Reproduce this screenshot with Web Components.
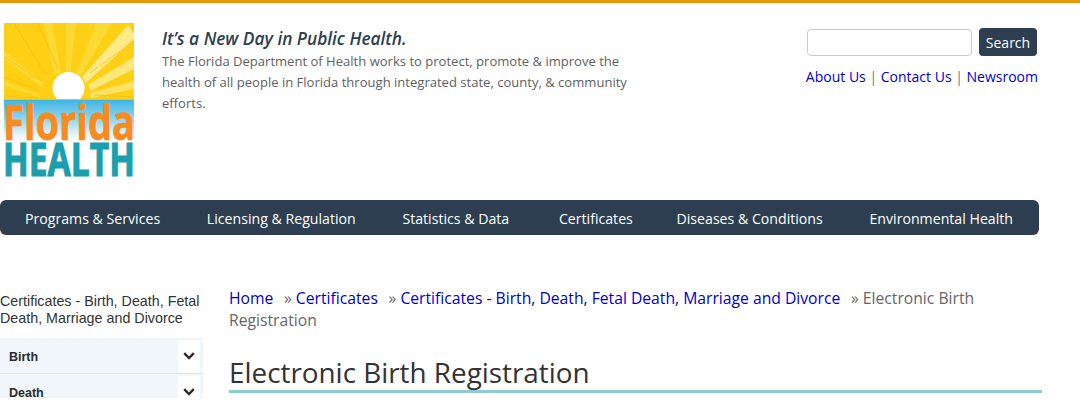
<!DOCTYPE html>
<html>
<head>
<meta charset="utf-8">
<title>Electronic Birth Registration</title>
<style>
  html, body { margin: 0; padding: 0; background: #fff; }
  body { font-family: "Open Sans", sans-serif; }
  #page { display: block; height: 198px; overflow: hidden; }
</style>
</head>
<body>

<template id="site-logo-tpl">
  <style>
    :host { display: block; width: 130px; height: 153px; flex: none; }
    svg { display: block; overflow: visible; }
    text { font-family: "Open Sans", sans-serif; }
  </style>
  <svg width="130" height="153" viewBox="0 0 130 153">
    <defs>
      <linearGradient id="sky" x1="0" y1="0" x2="0" y2="1">
        <stop offset="0" stop-color="#3db5e4"/>
        <stop offset=".5" stop-color="#9fd9ef"/>
        <stop offset=".85" stop-color="#f2f9fc"/>
        <stop offset="1" stop-color="#fff"/>
      </linearGradient>
    </defs>
    <rect width="130" height="77" fill="#fdd015"/>
    <g fill="#fdd933">
      <polygon points="62,50 62,0 72,0 66,50"/>
      <polygon points="72,52 92,0 108,0 76,54"/>
      <polygon points="50,52 40,0 48,0 57,50"/>
      <polygon points="40,60 0,28 0,36 38,64"/>
      <polygon points="36,72 0,58 0,63 36,74"/>
    </g>
    <g>
      <polygon points="78,54 124,2 130,10 130,16 82,60" fill="#feea86"/>
      <polygon points="84,62 130,34 130,46 86,68" fill="#fee77a"/>
      <polygon points="86,70 130,58 130,66 87,75" fill="#fee264"/>
    </g>
    <g stroke="#f5b50a" stroke-width=".6" fill="none">
      <path d="M42 52 10 0"/>
      <path d="M54 46 34 0"/>
      <path d="M38 58 0 34"/>
      <path d="M36 68 0 54"/>
      <path d="M34 75 0 73"/>
      <path d="M86 50 130 18"/>
      <path d="M90 72 130 74"/>
    </g>
    <circle cx="64.500" cy="65" r="16" fill="#fff"/>
    <rect y="76" width="130" height="1" fill="#f6c300"/>
    <rect y="77" width="130" height="43" fill="url(#sky)"/>
    <text transform="translate(-1 117) scale(1 1.250)" font-size="38" font-weight="700" fill="#f68b1f" stroke="#f68b1f" stroke-width=".5" textLength="132" lengthAdjust="spacingAndGlyphs">Florida</text>
    <rect y="120" width="130" height="33" fill="#fff"/>
    <text transform="translate(-1 153) scale(1 1.420)" font-size="32.400" font-weight="700" fill="#1b9fae" stroke="#1b9fae" stroke-width=".8" textLength="132" lengthAdjust="spacingAndGlyphs">HEALTH</text>
  </svg>
</template>

<template id="site-header-tpl">
  <style>
    :host { display: block; border-top: 3px solid #e8950e; }
    .row { display: flex; height: 197px; box-sizing: border-box; padding: 20px 42px 0 4px; }
    .intro { margin-left: 28px; width: 480px; color: #5f5f5f; }
    h2 { margin: 0; font: italic 600 17.300px/24px "Open Sans", sans-serif; color: #2c3e50; padding-top: 4px; }
    p { margin: 0; font: 13.060px/20.800px "Open Sans", sans-serif; }
    .right { margin-left: auto; width: 232px; display: flex; flex-direction: column; align-items: flex-end; padding-top: 5px; }
    .search { display: flex; gap: 7px; align-items: center; margin-right: 1px; }
    input { width: 165px; height: 27px; box-sizing: border-box; border: 1px solid #ccc; border-radius: 4px; padding: 0 6px; background: #fff; margin: 0; }
    button { width: 58px; height: 28px; border: 0; border-radius: 4px; background: #2c3e50; color: #fff; padding: 0; font: 14px "Open Sans", sans-serif; }
    .links { font: 14px/20px "Open Sans", sans-serif; color: #777; margin-top: 11px; white-space: nowrap; }
    a { color: #0000cd; text-decoration: none; }
  </style>
  <div class="row">
    <site-logo></site-logo>
    <div class="intro">
      <h2>It’s a New Day in Public Health.</h2>
      <p>The Florida Department of Health works to protect, promote &amp; improve the<br>health of all people in Florida through integrated state, county, &amp; community<br>efforts.</p>
    </div>
    <div class="right">
      <div class="search"><input type="text" aria-label="Search"><button>Search</button></div>
      <div class="links"><a href="#">About Us</a> | <a href="#">Contact Us</a> | <a href="#">Newsroom</a></div>
    </div>
  </div>
</template>

<template id="main-nav-tpl">
  <style>
    :host { display: flex; justify-content: space-between; align-items: center; box-sizing: border-box; width: 1039px; height: 35px; padding: 1px 26px 0 25px; background: #2c3e50; border-radius: 6px; }
    ::slotted(a) { color: #fff; text-decoration: none; font: 14.150px "Open Sans", sans-serif; white-space: nowrap; }
    ::slotted(a:nth-child(4)) { margin: 0 -3px 0 3px; }
  </style>
  <slot></slot>
</template>

<template id="side-menu-tpl">
  <style>
    :host { display: block; width: 203px; flex: none; }
    .title { font: 14.300px/17px "Liberation Sans", Arial, sans-serif; color: #333; margin-bottom: 11px; padding-top: 6px; white-space: nowrap; }
  </style>
  <div class="title"><slot name="title"></slot></div>
  <slot></slot>
</template>

<template id="side-item-tpl">
  <style>
    :host { display: flex; align-items: center; justify-content: space-between; height: 36px; padding: 2px 3px 1px 9px; box-sizing: border-box; background: #f0f6fa; border-bottom: 1px solid #dfe3e6; }
    span { font: bold 12.500px "Liberation Sans", Arial, sans-serif; color: #2b2b2b; position: relative; top: 1px; }
    .btn { width: 22px; height: 33px; background: #fff; display: flex; align-items: center; justify-content: center; }
    svg { display: block; }
  </style>
  <span><slot></slot></span>
  <div class="btn">
    <svg width="12" height="8" viewBox="0 0 12 8"><path d="M1.200 1.200 6 6 10.800 1.200" fill="none" stroke="#2b2b2b" stroke-width="2.400"/></svg>
  </div>
</template>

<template id="bread-crumbs-tpl">
  <style>
    :host { display: block; font: 15.700px/22px "Open Sans", sans-serif; color: #666; }
    ::slotted(a) { color: #0000cd; text-decoration: none; }
    ::slotted(.sep) { padding-left: 2.500px; }
  </style>
  <slot></slot>
</template>

<template id="page-title-tpl">
  <style>
    :host { display: block; margin-top: 21px; border-bottom: 3px solid #8ccbd3; height: 38px; }
    h1 { margin: 0; font: 400 27.850px/40px "Open Sans", sans-serif; color: #333; }
  </style>
  <h1><slot></slot></h1>
</template>

<template id="page-body-tpl">
  <style>
    :host { display: flex; padding-top: 52px; width: 1042px; }
    .content { margin-left: 26px; flex: 1; min-width: 0; }
  </style>
  <slot name="side"></slot>
  <div class="content"><slot></slot></div>
</template>

<site-header></site-header>
<div id="page">
  <main-nav>
    <a href="#">Programs &amp; Services</a>
    <a href="#">Licensing &amp; Regulation</a>
    <a href="#">Statistics &amp; Data</a>
    <a href="#">Certificates</a>
    <a href="#">Diseases &amp; Conditions</a>
    <a href="#">Environmental Health</a>
  </main-nav>
  <page-body>
    <side-menu slot="side">
      <span slot="title">Certificates - Birth, Death, Fetal<br>Death, Marriage and Divorce</span>
      <side-item>Birth</side-item>
      <side-item>Death</side-item>
    </side-menu>
    <div>
      <bread-crumbs>
        <a href="#">Home</a> <span class="sep">&nbsp;»</span> <a href="#">Certificates</a> <span class="sep">&nbsp;»</span> <a href="#">Certificates - Birth, Death, Fetal Death, Marriage and Divorce</a> <span class="sep">&nbsp;»</span> Electronic Birth<br>Registration
      </bread-crumbs>
      <page-title>Electronic Birth Registration</page-title>
    </div>
  </page-body>
</div>

<script>
  // each element just clones its template into an open shadow root
  class BaseElement extends HTMLElement {
    constructor() {
      super();
      const tpl = document.getElementById(this.localName + '-tpl');
      this.attachShadow({ mode: 'open' }).appendChild(tpl.content.cloneNode(true));
    }
  }

  ['site-logo', 'site-header', 'main-nav', 'side-menu', 'side-item', 'bread-crumbs', 'page-title', 'page-body'].forEach(name => {
    customElements.define(name, class extends BaseElement {});
  });
</script>
</body>
</html>
